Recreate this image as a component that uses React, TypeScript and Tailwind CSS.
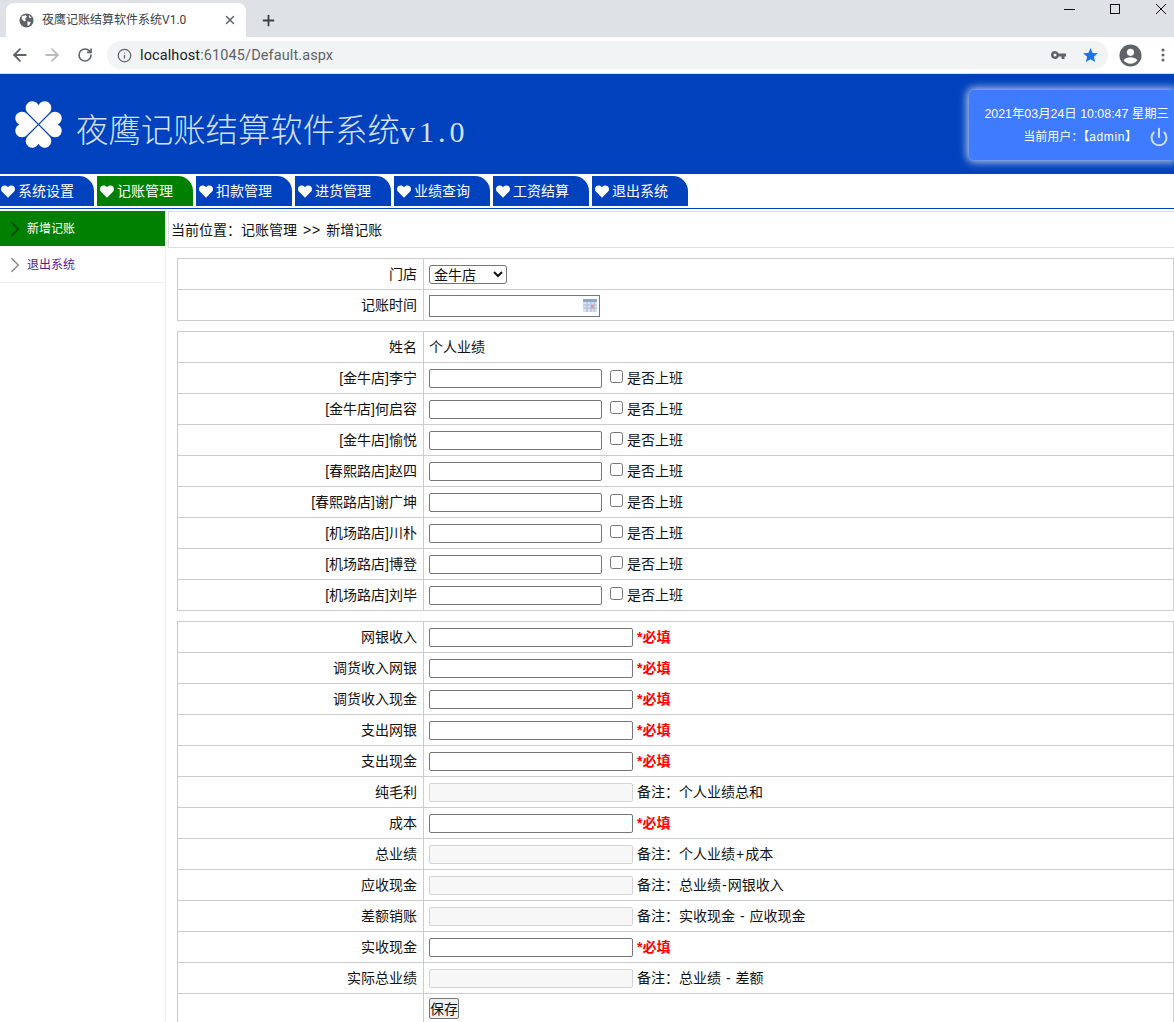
import React from "react";
import { ArrowLeft, ArrowRight, RotateCw, Info, X, Plus, ChevronRight, Power } from "lucide-react";

const font = "font-['Liberation_Sans','Noto_Sans_CJK_SC',sans-serif]";

function Heart({ className = "" }: { className?: string }) {
  return (
    <svg viewBox="0 0 16 14" className={className} fill="#fff">
      <path d="M8 14 L1.3 7.4 C-0.5 5.5 -0.4 2.6 1.4 1.1 C3.3 -0.5 6.3 -0.2 8 2.2 C9.7 -0.2 12.7 -0.5 14.6 1.1 C16.4 2.6 16.5 5.5 14.7 7.4 Z" />
    </svg>
  );
}

function Logo() {
  const leaf = "M0 -0.9 L-11 -11.9 A7 7 0 1 1 0 -20 A7 7 0 1 1 11 -11.9 Z";
  return (
    <svg viewBox="-24.5 -24.5 49 49" className="w-[47px] h-[47px] mt-[4px] shrink-0">
      {[0, 90, 180, 270].map((r) => (
        <path key={r} d={leaf} fill="#fff" transform={`rotate(${r})`} />
      ))}
    </svg>
  );
}

function Globe() {
  return (
    <svg viewBox="0 0 16 16" className="w-[15px] h-[15px]">
      <circle cx="8" cy="8" r="7.5" fill="#5f6368" />
      <path d="M3 3.5 L7 2.5 L8.5 4 L6.5 6 L7.5 8 L5.5 9 L3 6.5 Z M9 9 L12.5 9.5 L11 13 L9 13.5 Z M10.5 2 L13.5 5 L11 5.5 Z" fill="#fff" />
    </svg>
  );
}

function ProfileIcon() {
  return (
    <svg viewBox="0 0 24 24" className="w-[23px] h-[23px]">
      <circle cx="12" cy="12" r="11.5" fill="#5f6368" />
      <circle cx="12" cy="8.7" r="3.7" fill="#fff" />
      <path d="M4.8 17 C6.5 14.4 9.5 13.7 12 13.7 C14.5 13.7 17.5 14.4 19.2 17 C17.5 19.3 15 20.5 12 20.5 C9 20.5 6.5 19.3 4.8 17 Z" fill="#fff" />
    </svg>
  );
}

function KeyIcon() {
  return (
    <svg viewBox="0 0 15 8" className="w-[15px] h-[8px] ml-auto">
      <path fillRule="evenodd" fill="#5f6368" d="M4 0 A4 4 0 0 1 7.7 2.5 H15 V5.5 H13.5 V8 H10.5 V5.5 H7.7 A4 4 0 1 1 4 0 Z M4 2.5 A1.5 1.5 0 1 0 4 5.5 A1.5 1.5 0 1 0 4 2.5 Z" />
    </svg>
  );
}

function StarIcon() {
  return (
    <svg viewBox="0 0 16 15" className="w-[15px] h-[14px] ml-[17px] mr-[10px]">
      <path fill="#1a73e8" d="M8 0 L10.2 5.3 L16 5.7 L11.6 9.4 L13 15 L8 12 L3 15 L4.4 9.4 L0 5.7 L5.8 5.3 Z" />
    </svg>
  );
}

function Dots() {
  return (
    <svg viewBox="0 0 4 14" className="w-[4px] h-[14px] ml-[19px]">
      <circle cx="2" cy="2" r="1.5" fill="#5f6368" />
      <circle cx="2" cy="7" r="1.5" fill="#5f6368" />
      <circle cx="2" cy="12" r="1.5" fill="#5f6368" />
    </svg>
  );
}

function CalendarIcon() {
  return (
    <svg viewBox="0 0 14 13" className="w-[14px] h-[13px]">
      <rect x="0" y="0" width="14" height="13" fill="#dbe3f1" />
      <rect x="0" y="0" width="14" height="3" fill="#8fa5cf" />
      <path d="M0 6 H14 M0 9 H14 M4 3 V13 M8 3 V13 M11 3 V13" stroke="#aab8d4" strokeWidth="1" />
      <rect x="8" y="6" width="3" height="3" fill="#e89a8f" />
    </svg>
  );
}

const navItems = ["系统设置", "记账管理", "扣款管理", "进货管理", "业绩查询", "工资结算", "退出系统"];

const people = ["[金牛店]李宁", "[金牛店]何启容", "[金牛店]愉悦", "[春熙路店]赵四", "[春熙路店]谢广坤", "[机场路店]川朴", "[机场路店]博登", "[机场路店]刘毕"];

type F = { label: string; note?: string };
const fields: F[] = [
  { label: "网银收入" },
  { label: "调货收入网银" },
  { label: "调货收入现金" },
  { label: "支出网银" },
  { label: "支出现金" },
  { label: "纯毛利", note: "备注：个人业绩总和" },
  { label: "成本" },
  { label: "总业绩", note: "备注：个人业绩+成本" },
  { label: "应收现金", note: "备注：总业绩-网银收入" },
  { label: "差额销账", note: "备注：实收现金 - 应收现金" },
  { label: "实收现金" },
  { label: "实际总业绩", note: "备注：总业绩 - 差额" },
];

function Row({ label, children }: { label?: string; children: React.ReactNode }) {
  return (
    <tr className="h-[31px]">
      <td className="w-[246px] border border-[#ccc] text-right pr-[6px] p-0">{label}</td>
      <td className="border border-[#ccc] pl-[5px] p-0">
        <div className="flex items-center">{children}</div>
      </td>
    </tr>
  );
}

function Note({ text }: { text: string }) {
  return (
    <span className="ml-[4px] whitespace-pre">
      {text.split(/([+-])/).map((part, i) =>
        part === "+" || part === "-" ? (
          <span key={i} className="mx-[1px]">{part}</span>
        ) : (
          <span key={i}>{part}</span>
        )
      )}
    </span>
  );
}

const tableCls = "w-full border-collapse text-[14px] text-[#111] table-fixed";

export default function App() {
  return (
    <div className={`h-[1022px] w-[1174px] overflow-hidden bg-white ${font}`}>
      {/* browser chrome */}
      <div className="h-[37px] bg-[#dee1e6] flex items-end">
        <div className="ml-[6px] w-[240px] h-[34px] bg-white rounded-t-[8px] flex items-center pl-[13px] pr-[9px] gap-[8px]">
          <Globe />
          <span className="text-[12px] text-[#3c4043] flex-1 font-['Roboto','Noto_Sans_CJK_SC',sans-serif]">夜鹰记账结算软件系统V1.0</span>
          <X size={14} strokeWidth={2.5} className="text-[#5f6368]" />
        </div>
        <Plus size={17} strokeWidth={2.5} className="text-[#3c4043] ml-[14px] mb-[8px]" />
        <div className="ml-auto self-start flex items-start gap-[35px] pt-[4px] pr-[8px]">
          <svg viewBox="0 0 11 10" className="w-[11px] h-[10px]"><path d="M0 5.5 H11" stroke="#111" strokeWidth="1" /></svg>
          <svg viewBox="0 0 10 10" className="w-[10px] h-[10px]"><rect x="0.5" y="0.5" width="9" height="9" fill="none" stroke="#111" strokeWidth="1" /></svg>
          <svg viewBox="0 0 10 10" className="w-[10px] h-[10px] ml-[1px]"><path d="M0 0 L10 10 M10 0 L0 10" stroke="#111" strokeWidth="1" /></svg>
        </div>
      </div>
      <div className="h-[36px] bg-white flex items-center border-b border-[#dadce0] box-content">
        <ArrowLeft size={20} strokeWidth={2.2} className="text-[#5f6368] ml-[10px]" />
        <ArrowRight size={20} strokeWidth={2.2} className="text-[#babcbe] ml-[12px]" />
        <RotateCw size={16} strokeWidth={2.4} className="text-[#5f6368] ml-[15px]" />
        <div className="ml-[14px] w-[1001px] h-[28px] rounded-full bg-[#f1f3f4] flex items-center pl-[10px]">
          <Info size={15} strokeWidth={2} className="text-[#5f6368]" />
          <span className="ml-[8px] pt-[1px] text-[14.5px] text-[#5f6368] tracking-[0.1px] font-['Roboto',sans-serif]"><span className="text-[#202124]">localhost</span>:61045/Default.aspx</span>
          <KeyIcon />
          <StarIcon />
        </div>
        <div className="ml-[11px]"><ProfileIcon /></div>
        <Dots />
      </div>

      {/* header */}
      <div className="h-[100px] bg-[#0041bd] flex items-center justify-between">
        <div className="flex items-center pl-[15px] pb-[4px]">
          <Logo />
          <div className="ml-[14px] mt-[14px] text-[32.4px] leading-none text-[#d5e0f7] font-extralight font-['Noto_Sans_CJK_SC',sans-serif] whitespace-nowrap">
            夜鹰记账结算软件系统<span className="font-['Liberation_Serif',serif] text-[30px] tracking-[4px]">v1.0</span>
          </div>
        </div>
        <div className="w-[205px] h-[70px] mt-[1px] rounded-l-[5px] bg-[#3e7bff] shadow-[0_0_8px_2px_rgba(255,255,255,0.75)] text-white text-[12.4px] text-right pr-[5px] pt-[14px]">
          <div className="whitespace-nowrap leading-[21px]">2021年03月24日 10:08:47 星期三</div>
          <div className="flex items-center justify-end gap-[12px] leading-[25px] text-[12px]">
            <span>当前用户：【<span className="tracking-[0.6px]">admin</span>】</span>
            <Power size={20} strokeWidth={2.4} className="text-[#cfe0ff]" />
          </div>
        </div>
      </div>

      {/* nav */}
      <div className="mt-[2px] h-[33px] border-b border-[#0041bd] flex gap-[3px] ml-[-2px] w-[1176px]">
        {navItems.map((n, i) => (
          <div key={n} className={`w-[96px] h-[30px] rounded-tr-[15px] flex items-center text-white text-[14px] pl-[3px] ${i === 1 ? "bg-[#008000]" : "bg-[#0041bd]"}`}>
            <Heart className="w-[14px] h-[13px] mr-[3px]" />
            <span className="whitespace-nowrap">{n}</span>
          </div>
        ))}
      </div>

      <div className="flex">
        {/* sidebar */}
        <div className="w-[166px] mt-[2px] border-r border-[#eee] h-[820px] shrink-0 text-[12px]">
          <div className="h-[35px] bg-[#008000] flex items-center text-white">
            <ChevronRight size={26} strokeWidth={1.3} className="text-[#0a3a0a] ml-[2px] mr-[-1px]" />
            <span>新增记账</span>
          </div>
          <div className="h-[37px] border-b border-[#eee] flex items-center text-[#551a8b] pt-[2px]">
            <ChevronRight size={26} strokeWidth={1.3} className="text-[#888] ml-[2px] mr-[-1px]" />
            <span>退出系统</span>
          </div>
        </div>

        {/* main */}
        <div className="flex-1 min-w-0 ml-[2px] mt-[2px]">
          <div className="h-[37px] border border-[#ddd] border-r-0 flex items-center pl-[2px] pt-[1px] text-[14px] text-[#111] mb-[10px] whitespace-pre">
            当前位置：记账管理 <span className="tracking-[1px] ml-[2px] mr-[1px]">&gt;&gt;</span> 新增记账
          </div>
          <div className="ml-[9px] flex flex-col gap-[10px]">
            <table className={tableCls}>
              <tbody>
                <Row label="门店">
                  <select className="w-[78px] h-[19px] border border-[#767676] rounded-[3px] text-[14px] bg-white">
                    <option>金牛店</option>
                  </select>
                </Row>
                <Row label="记账时间">
                  <div className="w-[171px] h-[22px] mt-[1px] border border-[#767676] flex items-center justify-end pr-[2px]">
                    <CalendarIcon />
                  </div>
                </Row>
              </tbody>
            </table>
            <table className={tableCls}>
              <tbody>
                <Row label="姓名">个人业绩</Row>
                {people.map((p) => (
                  <Row key={p} label={p}>
                    <input type="text" className="w-[173px] h-[19px] border border-[#767676] rounded-[2px] bg-white" />
                    <input type="checkbox" className="w-[13px] h-[13px] ml-[8px] mr-[4px] mb-[3px]" />
                    <span>是否上班</span>
                  </Row>
                ))}
              </tbody>
            </table>
            <table className={tableCls}>
              <tbody>
                {fields.map((f) => (
                  <Row key={f.label} label={f.label}>
                    {f.note ? (
                      <input type="text" disabled className="w-[204px] h-[19px] border border-[#d4d4d4] rounded-[2px] bg-[#f7f7f7]" />
                    ) : (
                      <input type="text" className="w-[204px] h-[19px] border border-[#767676] rounded-[2px] bg-white" />
                    )}
                    {f.note ? (
                      <Note text={f.note} />
                    ) : (
                      <span className="ml-[4px] text-[#f00] font-bold">*必填</span>
                    )}
                  </Row>
                ))}
                <Row>
                  <button className="w-[30px] h-[21px] mb-[1px] border border-[#767676] rounded-[2px] bg-[#efefef] text-[14px] text-[#111] leading-none">保存</button>
                </Row>
              </tbody>
            </table>
          </div>
        </div>
      </div>
    </div>
  );
}
